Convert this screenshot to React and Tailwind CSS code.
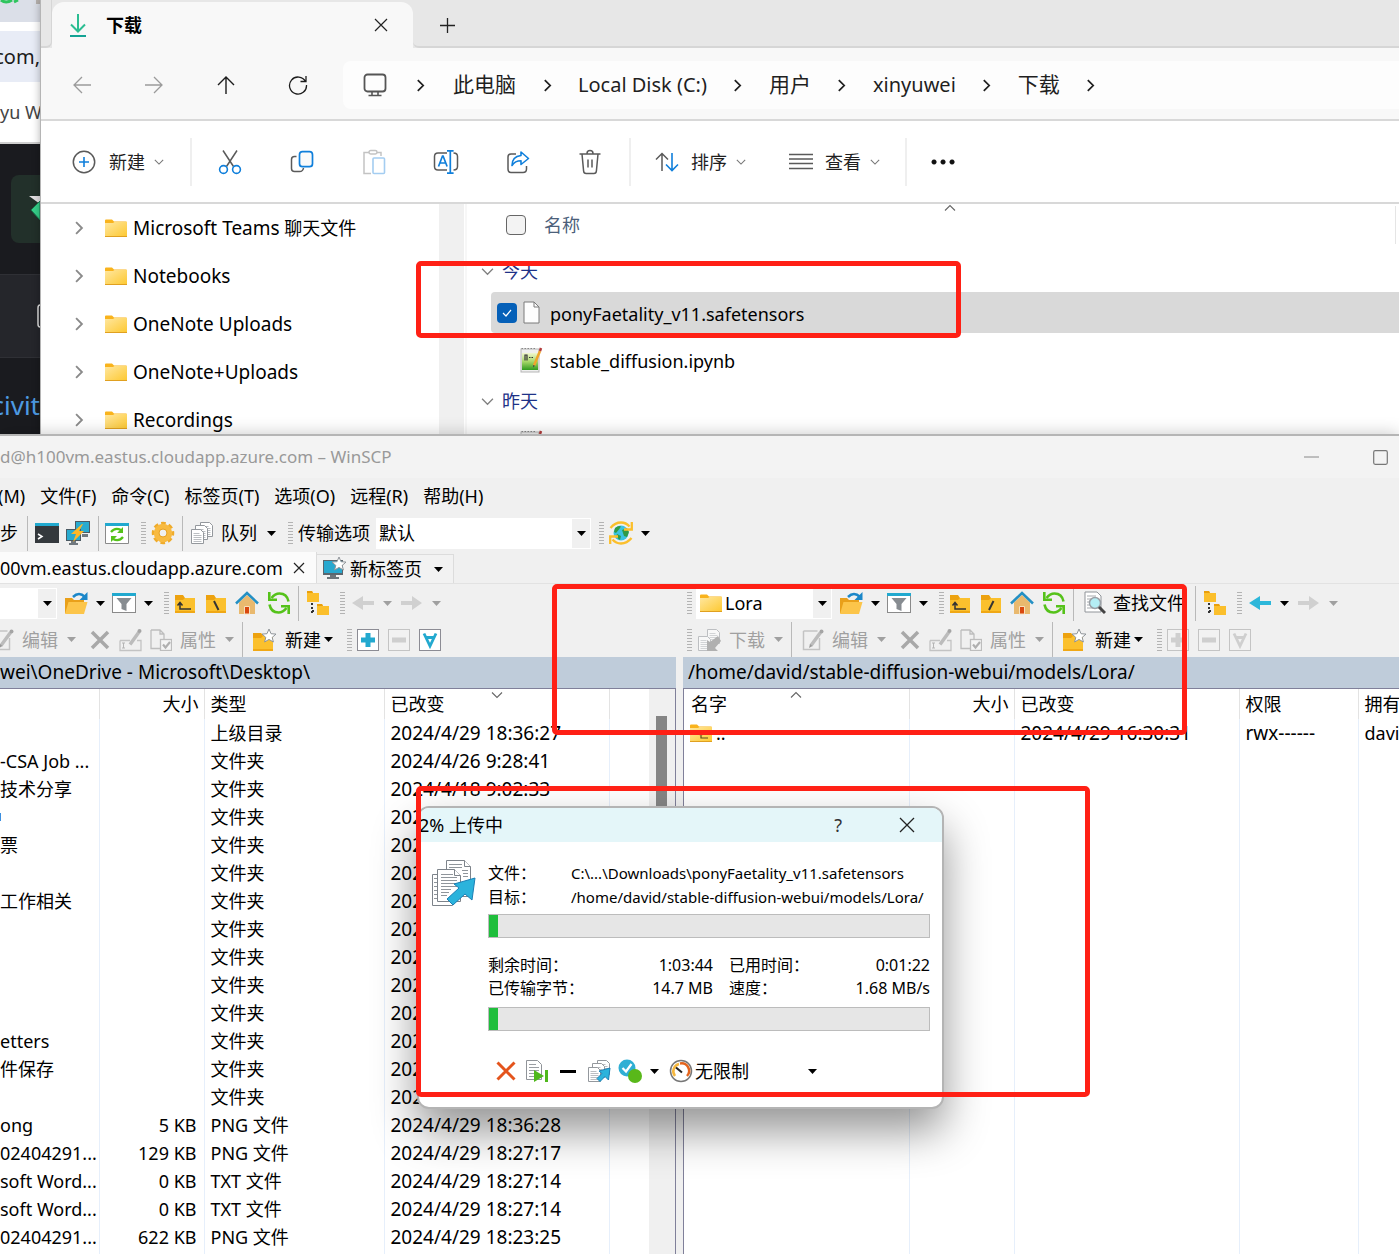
import React from "react";

/* ---------- small shared pieces ---------- */

const Svg = ({ w = 24, h = w, vb = `0 0 ${w} ${h}`, children, className = "" }) => (
  <svg width={w} height={h} viewBox={vb} fill="none" className={"shrink-0 " + className} aria-hidden="true">
    {children}
  </svg>
);

const Slot = ({ w, label, children }) => (
  <button type="button" aria-label={label} className={"flex h-full shrink-0 items-center justify-center " + w}>
    {children}
  </button>
);

const Tri = ({ w = "w-[10px]", off }) => (
  <Slot w={w} label="more">
    <Svg w={9} h={5}>
      <path d="M0 0h9L4.5 5z" fill={off ? "#a0a0a0" : "#000"} />
    </Svg>
  </Slot>
);

const Sep = () => <span className="h-[35px] w-px shrink-0 bg-[#b9b9b9]" />;

const Grip = () => (
  <Svg w={5} h={22}>
    <path d="M0 .5h5M0 3.5h5M0 6.5h5M0 9.5h5M0 12.5h5M0 15.5h5M0 18.5h5M0 21.5h5" stroke="#b3b3b3" />
  </Svg>
);

const Chevron = ({ dir = "right", size = 12, color = "#1f1f1f", sw = 1.6 }) => {
  const d = {
    right: "M3.5 1 8.5 6 3.5 11",
    down: "M1 3.5 6 8.5 11 3.5",
    up: "M1 8.5 6 3.5 11 8.5",
  }[dir];
  return (
    <Svg w={size} vb="0 0 12 12">
      <path d={d} stroke={color} strokeWidth={sw} />
    </Svg>
  );
};

/* ---------- explorer icons ---------- */

const G = "#5a5a5a";
const B = "#0f7fdb";

const Folder = ({ children }) => (
  <Svg w={22} h={18}>
    <defs>
      <linearGradient id="fold" x1="0" y1="0" x2="1" y2="1">
        <stop offset="0" stopColor="#ffe7a0" />
        <stop offset="1" stopColor="#fdc933" />
      </linearGradient>
    </defs>
    <path d="M0 1.5Q0 .5 1 .5h6l2 2h12q1 0 1 1V6H0z" fill="#f9b31c" />
    <path d="M0 4h8l1.500-1H22v14H0z" fill="url(#fold)" />
    <path d="M0 17h22v1H0z" fill="#e0a020" />
    {children}
  </Svg>
);

const NewIcon = () => (
  <Svg w={24}>
    <circle cx="12" cy="12" r="10.700" stroke={G} strokeWidth="1.500" />
    <path d="M12 7v10M7 12h10" stroke={B} strokeWidth="1.600" />
  </Svg>
);
const CutIcon = () => (
  <Svg w={24} h={26}>
    <path d="M5 1.500 15.500 17.500M19 1.500 8.500 17.500" stroke={G} strokeWidth="1.500" />
    <circle cx="5.500" cy="20.500" r="3.900" stroke={B} strokeWidth="1.600" />
    <circle cx="18.500" cy="20.500" r="3.900" stroke={B} strokeWidth="1.600" />
  </Svg>
);
const CopyIcon = () => (
  <Svg w={24}>
    <path d="M6.500 6.500H4.500q-3 0-3 3v9q0 3 3 3h5q3.500 0 4-3.500" stroke={G} strokeWidth="1.500" />
    <rect x="9.500" y="1.700" width="13" height="15" rx="3" stroke={B} strokeWidth="1.700" fill="#fafafa" />
  </Svg>
);
const PasteIcon = () => (
  <Svg w={24} h={26}>
    <path d="M9 24.500H2V3.500h5M15 3.500h4V7" stroke="#c3c3c3" strokeWidth="1.500" />
    <rect x="7" y="1.500" width="8" height="3.500" rx="1.700" stroke="#c3c3c3" strokeWidth="1.500" />
    <rect x="11" y="9" width="11.500" height="15.500" rx="1" stroke="#a4cdf1" strokeWidth="1.600" />
  </Svg>
);
const RenameIcon = () => (
  <Svg w={26} h={26}>
    <path d="M14 4H5Q1.500 4 1.500 7.500v10Q1.500 21 5 21h9M20.500 4q4 0 4 3.500v10q0 3.500-4 3.500" stroke={G} strokeWidth="1.500" />
    <path d="m5.500 17.500 4-10.500h.6l4 10.500M7 14h5.500" stroke={B} strokeWidth="1.700" />
    <path d="M17.300 2v22M14 1.800h6.600M14 24.200h6.600" stroke={B} strokeWidth="1.700" />
  </Svg>
);
const ShareIcon = () => (
  <Svg w={24}>
    <path d="M10 4H5Q2 4 2 7v12q0 3.500 3 3.500h12q3.500 0 3.500-3.500v-3" stroke={G} strokeWidth="1.500" />
    <path d="M15 2l7.500 6.500-7.500 6v-3.700q-6 0-9 4.700 0-9 9-10z" stroke={B} strokeWidth="1.600" strokeLinejoin="round" />
  </Svg>
);
const TrashIcon = () => (
  <Svg w={24} h={26}>
    <path d="M1.500 5h21M9 4.500q0-3 3-3t3 3M4 5l1.600 17q.2 2.500 2.500 2.500h7.800q2.300 0 2.500-2.500L20 5M10 10.500v8M14 10.500v8" stroke={G} strokeWidth="1.500" />
  </Svg>
);
const SortIcon = () => (
  <Svg w={24} h={20}>
    <path d="M7 19V1.500M1 7.500l6-6 6 6" stroke={G} strokeWidth="1.500" />
    <path d="M17 1v17.500M11 12.500l6 6 6-6" stroke={B} strokeWidth="1.600" />
  </Svg>
);
const LinesIcon = () => (
  <Svg w={24} h={17}>
    <path d="M0 1.500h24M0 6h24M0 10.500h24M0 15.500h24" stroke={G} strokeWidth="1.500" />
  </Svg>
);
const NotebookFile = () => (
  <Svg w={24} h={26}>
    <defs>
      <linearGradient id="nbk" x1="0" y1="0" x2="0" y2="1">
        <stop offset="0" stopColor="#f2f7d0" />
        <stop offset=".5" stopColor="#a8d86a" />
        <stop offset="1" stopColor="#2f9a1e" />
      </linearGradient>
    </defs>
    <rect x="2" y="2" width="18" height="23" fill="#efefef" stroke="#b5b5b5" />
    <path d="M2.500 1.500h14" stroke="#888" strokeDasharray="1.500 1.500" />
    <rect x="3" y="6" width="16" height="17" fill="url(#nbk)" />
    <path d="M6 13.500V8h2v5.500M10 10.500h1.500M12.500 10.500H14" stroke="#333" strokeWidth="1.200" />
    <path d="M21 4 15 18.500" stroke="#f0a52c" strokeWidth="2.500" />
    <path d="m22 1-1 3" stroke="#b33b3b" strokeWidth="2.500" />
    <path d="m14 20.500.2-2.500 1.800.8z" fill="#444" />
  </Svg>
);
const BlankFile = () => (
  <Svg w={17} h={23}>
    <path d="M1 1h10l5 5v16H1z" fill="#fdfdfd" stroke="#7a7a7a" />
    <path d="M11 1v5h5" stroke="#7a7a7a" />
  </Svg>
);

/* ---------- transfer-client icons ---------- */

const YFolder = ({ children }) => (
  <Svg w={22} h={22}>
    <path d="M1 3h8l2 3h10v3H1z" fill="#eda20f" />
    <path d="M1 8h8l2-2h10v14H1z" fill="#fbc02d" />
    <path d="M1 19h20v2H1z" fill="#f0a815" />
    {children}
  </Svg>
);
const FolderUp = () => (
  <YFolder><path d="M6 11v6h11M3.500 13.500 6 10.500l2.500 3" stroke="#333" strokeWidth="1.500" /></YFolder>
);
const FolderRoot = ({ back }) => (
  <YFolder><path d={back ? "M9 9l4.500 9" : "M13.500 9 9 18"} stroke="#333" strokeWidth="2" /></YFolder>
);
const FolderOpen = () => (
  <Svg w={24}>
    <path d="M1 7h7l2 2h10v13H1z" fill="#e9a01a" />
    <path d="M4.500 11h19L20 23H1z" fill="#fcc54a" />
    <path d="M9 6q6-6 12 0" stroke="#1b87c9" strokeWidth="2.500" />
    <path d="M23.500 1v8h-8z" fill="#1b87c9" />
  </Svg>
);
const FilterIcon = () => (
  <Svg w={24} h={22}>
    <rect x=".5" y="1.500" width="23" height="19" fill="#fff" stroke="#8a8a8a" />
    <path d="M0 1h24v3H0z" fill="#21a9cf" />
    <path d="M4.500 6h15l-5 6v7l-5-2v-5z" fill="#878c91" />
  </Svg>
);
const HomeIcon = () => (
  <Svg w={24}>
    <path d="M4 11.500 12 4l8 7.500V23H4z" fill="#e9b96e" />
    <path d="M1 12.500 12 2l11 10.500" stroke="#2490c4" strokeWidth="2.500" />
    <path d="M9.500 15.500h5V23h-5z" fill="#d9480f" stroke="#f7e0bd" />
  </Svg>
);
const RefreshIcon = () => (
  <Svg w={24}>
    <path d="M4.500 7Q8 2.500 12.500 2.500q7.500 0 9 8M19.500 17q-3.500 4.500-8 4.500-7.500 0-9-8" stroke="#55c21a" strokeWidth="2.600" />
    <path d="M2.300 1v7.700H10M21.700 23v-7.700H14" stroke="#55c21a" strokeWidth="2.600" />
  </Svg>
);
const TreeIcon = () => (
  <Svg w={24} h={26}>
    <path d="M1 1h5l1 2h6v9H1zM11 14h5l1 2h6v9H11z" fill="#fbbf2c" />
    <path d="M1 1h5l1 2H1zM11 14h5l1 2h-6z" fill="#e99f0c" />
    <path d="M6 13v10M6 21h4" stroke="#333" strokeWidth="2" strokeDasharray="2 2" />
  </Svg>
);
const Arrow = ({ right, on }) => (
  <Svg w={22} h={16}>
    <path d={right ? "M0 6h11V1l10 7-10 7v-5H0z" : "M22 6H11V1L0 8l11 7v-5h11z"} fill={on ? "#2db7da" : "#d0d0d0"} />
  </Svg>
);
const FindIcon = () => (
  <Svg w={22} h={24}>
    <path d="M1 1h12l4 4v16H1z" fill="#fff" stroke="#909499" />
    <path d="M3 5h9M3 8h5M3 11h4M3 14h4M3 17h6" stroke="#a6aaaf" />
    <circle cx="11" cy="12" r="5.500" fill="#b4eef5" stroke="#9aa0a6" strokeWidth="1.500" />
    <path d="m15 16 6 6" stroke="#444" strokeWidth="3" />
  </Svg>
);
const EditIcon = () => (
  <Svg w={22}>
    <path d="M1.500 2h14M1.500 2v18.500h16V9" stroke="#c3c3c3" strokeWidth="1.500" />
    <path d="M18.500 3.500 9 16.500" stroke="#bcbcbc" strokeWidth="3.500" />
    <circle cx="19.500" cy="2.500" r="2" fill="#a5a5a5" />
    <path d="m7 19 1-4 2.500 2z" fill="#999" />
  </Svg>
);
const XGray = () => (
  <Svg w={20}><path d="m2 2 16 16M18 2 2 18" stroke="#a8a8a8" strokeWidth="3.500" /></Svg>
);
const RenGray = () => (
  <Svg w={23} h={24}>
    <path d="M1 12.500h10M18 12.500h4v10H1v-10" stroke="#c3c3c3" strokeWidth="1.300" />
    <path d="M3 15h3M3 20h3M4.500 15v5" stroke="#b5b5b5" />
    <path d="M20 4 11 16.500" stroke="#bcbcbc" strokeWidth="3.500" />
    <circle cx="20.500" cy="3" r="2" fill="#a5a5a5" />
  </Svg>
);
const PropsIcon = () => (
  <Svg w={22}>
    <path d="M1 1h9l4 4v5M1 1v18.500h9M10 1v4h4" stroke="#bdbdbd" strokeWidth="1.300" />
    <rect x="10.500" y="10.500" width="11" height="11" fill="#f5f5f5" stroke="#bdbdbd" strokeWidth="1.300" />
    <path d="m13 15.500 2.500 3L20 13" stroke="#b0b0b0" strokeWidth="2.200" />
  </Svg>
);
const Star = ({ x, y }) => (
  <path transform={`translate(${x} ${y})`} d="M7 0l2 4.700 5 .4-3.800 3.300L11.400 13 7 10.400 2.600 13l1.200-4.600L0 5.100l5-.4z" fill="#fff" stroke="#8f9499" />
);
const NewFolderIcon = () => (
  <Svg w={25} h={24}>
    <path d="M1 5h8l2 3h10v15H1z" fill="#fbc02d" />
    <path d="M1 5h8l2 3-2 2H1z" fill="#eda20f" />
    <path d="M1 21h20v2H1z" fill="#f0a815" />
    <Star x={10} y={1} />
  </Svg>
);
const BoxIcon = ({ kind, off }) => {
  const c = off ? "#cfcfcf" : "#23a9cf";
  const d = { plus: "M11 4v14M4 11h14", minus: "M4 11h14" }[kind];
  return (
    <Svg w={22}>
      <rect x=".5" y=".5" width="21" height="21" fill={off ? "#f2f2f2" : "#fff"} stroke={off ? "#c4c4c4" : "#8c8c94"} />
      {d ? <path d={d} stroke={c} strokeWidth="5" /> : <path d="m5 4.500 6 12.500 6-12.500M7.500 8.500h7" stroke={c} strokeWidth="2.800" />}
    </Svg>
  );
};
const Page = ({ x, y, fill = "#fff" }) => (
  <g transform={`translate(${x} ${y})`}>
    <path d="M.5.500h9l3 3v11h-12z" fill={fill} stroke="#94989d" />
    <path d="M2.500 4.500h6M2.500 6.500h8M2.500 8.500h8M2.500 10.500h8M2.500 12.500h8" stroke="#a9adb2" strokeWidth=".8" />
  </g>
);
const QueueIcon = () => (
  <Svg w={24}><Page x={10} y={1} /><Page x={5} y={4} /><Page x={1} y={8} /></Svg>
);
const DownloadIcon = () => (
  <Svg w={24}>
    <g opacity=".55"><Page x={10} y={1} /><Page x={1} y={8} /></g>
    <path d="m21 8-8 6-3-2v11h11l-3-3 6-7z" fill="#b0b0b0" />
  </Svg>
);
const TerminalIcon = () => (
  <Svg w={24} h={20}>
    <path d="M0 0h24v20H0z" fill="#34393d" /><path d="M0 0h24v3H0z" fill="#21a9cf" />
    <path d="m3 11 4 2.500L3 16" stroke="#fff" strokeWidth="1.500" />
  </Svg>
);
const PuttyIcon = () => (
  <Svg w={24} h={24}>
    <path d="M9 0h15v12H9z" fill="#4b5a63" /><path d="M10 1h13v10H10z" fill="#28abd0" />
    <path d="M0 8h15v12H0z" fill="#4b5a63" /><path d="M1 9h13v10H1z" fill="#28abd0" />
    <path d="M5 20h5v2h2v2H3v-2h2zM16 13h6v3h-6z" fill="#70787e" />
    <path d="M16 3 5 13h5l-3 8 11-11h-5l4-7z" fill="#fcb827" />
  </Svg>
);
const SyncWindow = () => (
  <Svg w={24} h={21}>
    <path d="M.5.500h23v20H.5z" fill="#fff" stroke="#8a8a8a" /><path d="M0 0h24v3H0z" fill="#21a9cf" />
    <path d="M6 9q4-5 10-2M18 14q-4 5-10 2" stroke="#55c21a" strokeWidth="2.300" />
    <path d="M18 4v6h-6zM6 19v-6h6z" fill="#55c21a" />
  </Svg>
);
const GearIcon = () => (
  <Svg w={24}>
    <circle cx="12" cy="12" r="9" stroke="#efab2a" strokeWidth="4.500" strokeDasharray="4.270 2.800" strokeDashoffset="2" />
    <circle cx="12" cy="12" r="6.500" stroke="#f8ba40" strokeWidth="5.500" />
    <circle cx="12" cy="12" r="4" stroke="#e8a325" />
  </Svg>
);
const GlobeIcon = () => (
  <Svg w={24} h={24}>
    <circle cx="12" cy="12" r="7.500" fill="#3cc3e0" />
    <path d="M6 7q4-3 6-1.500l-2 3-3 3.500-2-1zM13 9l5-2 2 4-2 5-3-1zM8 13l4 2-1 4-4-3z" fill="#2f9b46" />
    <path d="M1.500 7Q6 1.500 12 1.500q5 0 8.500 4M22.500 17Q18 22.500 12 22.500q-5 0-8.500-4" stroke="#fbbf2c" strokeWidth="2.300" />
    <path d="M22.800 1v7.500H15M1.200 23v-7.500H9" stroke="#fbbf2c" strokeWidth="2.300" />
  </Svg>
);
const NewTabIcon = () => (
  <Svg w={24} h={24}>
    <path d="M1 3h20v15H1z" fill="#5b666e" /><path d="M2 4h18v12H2z" fill="#28a8cf" />
    <path d="M8 18h6v2h3v2H5v-2h3z" fill="#6c747a" />
    <Star x={10} y={0} />
  </Svg>
);

/* ---------- browser strip behind the explorer ---------- */

const BrowserStrip = () => (
  <div className="flex w-10 shrink-0 flex-col overflow-hidden whitespace-nowrap bg-[#1a1b1f]">
    <div className="flex h-[22px] shrink-0 justify-between bg-[#dbdfe8]">
      <Svg w={20} h={4}><path d="M1 0q5 4 11 0M14 2l4-2" stroke="#2fc55e" strokeWidth="3" /></Svg>
      <span className="h-1 w-1 bg-[#b5b0ad]" />
    </div>
    <div className="h-[9px] shrink-0 bg-white" />
    <div className="flex h-[51px] shrink-0 items-center justify-end bg-[#e8ecf6] text-[20px] text-[#1c1c1c]">com,</div>
    <div className="flex h-[62px] shrink-0 items-center border-b-2 border-[#cfcfcf] bg-white text-lg text-[#444]">yu W</div>
    <div className="ml-[11px] mt-[31px] flex h-[68px] shrink-0 items-center justify-end rounded-l-lg bg-[#22302a]">
      <Svg w={11} h={28}>
        <path d="M0 1h11v8z" fill="#e2dfe2" />
        <path d="M11 6 2 15l9 10z" fill="#36d08a" stroke="#1a7a50" />
      </Svg>
    </div>
    <div className="mt-[31px] flex h-[84px] shrink-0 items-center justify-end border-y border-[#2f3035] bg-[#25262b]">
      <Svg w={3} h={24}><path d="M3 1Q1 1 1 4v16q0 3 2 3" stroke="#e0e0e0" strokeWidth="1.500" /></Svg>
    </div>
    <div className="flex h-[94px] shrink-0 items-center justify-end text-[26px] text-[#4d9ae2]">civit</div>
  </div>
);

/* ---------- explorer ---------- */

const Crumb = ({ children, cjk }) => (
  <>
    <button type="button" className={"shrink-0 " + (cjk ? "text-[21px]" : "text-[20px]")}>{children}</button>
    <span className="flex w-[62px] shrink-0 justify-center"><Chevron size={13} /></span>
  </>
);

const Divider = () => <span className="h-12 w-0.5 shrink-0 bg-[#efefef]" />;

const FileRow = ({ icon, name, selected }) => (
  <li className={"mb-1.5 ml-6 flex h-[41px] shrink-0 items-center rounded-l-sm " + (selected ? "bg-[#d9d9d9]" : "")}>
    <label className="flex items-center">
      <span className="flex w-[26px] justify-end">
        {selected && (
          <>
            <input type="checkbox" defaultChecked className="peer sr-only" />
            <span className="flex h-5 w-5 items-center justify-center rounded bg-[#0560b8]">
              <Svg w={10} h={8}><path d="m1 4 3 3 5-6" stroke="#fff" strokeWidth="1.200" /></Svg>
            </span>
          </>
        )}
      </span>
      <span className="flex w-7 justify-center">{icon}</span>
      <span className="ml-[5px] pt-0.5 text-lg">{name}</span>
    </label>
  </li>
);

const GroupHead = ({ children }) => (
  <button type="button" className="ml-3.5 flex h-[42px] shrink-0 items-center gap-2 text-lg text-[#1e3287]">
    <Chevron dir="down" color="#808080" sw={1.2} size={13} />
    {children}
  </button>
);

const Explorer = () => (
  <section className="flex min-w-0 flex-1 flex-col border-l border-[#b5b5b5] bg-white shadow-[0_0_8px_rgba(0,0,0,0.3)]">
    <div className="flex h-12 shrink-0 bg-[#e7e7e7]">
      <div className="w-[11px] rounded-br-md border-b-2 border-r border-[#d6d6d6]" />
      <div className="mt-0.5 flex w-[361px] items-center rounded-t-xl bg-[#f8f8f8] pl-4 pr-[25px]">
        <Svg w={20} h={24}>
          <path d="M10 1v17M3 11.500l7 7 7-7" stroke="#2bbd92" strokeWidth="2" />
          <path d="M2 23h16" stroke="#14a394" strokeWidth="2" />
        </Svg>
        <h1 className="ml-[18px] flex-1 text-lg font-bold">下载</h1>
        <button type="button" aria-label="close tab">
          <Svg w={14}><path d="m1 1 12 12M13 1 1 13" stroke="#222" strokeWidth="1.200" /></Svg>
        </button>
      </div>
      <button type="button" aria-label="new tab" className="flex flex-1 items-center rounded-bl-md border-b-2 border-[#d6d6d6] pl-[27px] pt-1">
        <Svg w={15}><path d="M7.500 0v15M0 7.500h15" stroke="#222" strokeWidth="1.300" /></Svg>
      </button>
    </div>

    <nav className="flex h-[73px] shrink-0 items-center border-b-2 border-[#d8d8d8] bg-[#f8f8f8] pl-[5px] pt-[3px]">
      <Slot w="w-[72px]" label="back"><Svg w={18}><path d="M18 9H1M9 1 1 9l8 8" stroke="#9b9b9b" strokeWidth="1.300" /></Svg></Slot>
      <Slot w="w-[72px]" label="forward"><Svg w={18}><path d="M0 9h17M9 1l8 8-8 8" stroke="#9b9b9b" strokeWidth="1.300" /></Svg></Slot>
      <Slot w="w-[72px]" label="up"><Svg w={18}><path d="M9 18V1M1 9l8-8 8 8" stroke="#1c1c1c" strokeWidth="1.400" /></Svg></Slot>
      <Slot w="w-[72px]" label="refresh">
        <Svg w={20}><path d="M17.500 6.500A8.500 8.500 0 1 0 18.500 10M18 1v5.500h-5.500" stroke="#1c1c1c" strokeWidth="1.300" /></Svg>
      </Slot>
      <div className="ml-[9px] flex h-12 min-w-0 flex-1 items-center overflow-hidden rounded-l-lg bg-[#fdfdfd] pl-5 text-[#1f1f1f]">
        <Svg w={24} h={24}>
          <rect x="1.500" y="1.500" width="21" height="17" rx="3" stroke="#555" strokeWidth="1.800" />
          <path d="M9 19v3M15 19v3M5.500 22.500h13" stroke="#555" strokeWidth="1.600" />
        </Svg>
        <span className="flex w-[66px] shrink-0 justify-center"><Chevron size={13} /></span>
        <Crumb cjk>此电脑</Crumb>
        <Crumb>Local Disk (C:)</Crumb>
        <Crumb cjk>用户</Crumb>
        <Crumb>xinyuwei</Crumb>
        <Crumb cjk>下载</Crumb>
      </div>
    </nav>

    <div className="flex h-[83px] shrink-0 items-center border-b-2 border-[#d8d8d8] text-lg text-[#1f1f1f]">
      <button type="button" className="flex w-[149px] shrink-0 items-center pl-[31px]">
        <NewIcon /><span className="ml-[13px]">新建</span>
        <span className="ml-[9px]"><Chevron dir="down" size={10} color="#777" sw={1.3} /></span>
      </button>
      <Divider />
      <div className="flex h-full pl-0.5 pr-[3px]">
        <Slot w="w-[72px]" label="cut"><CutIcon /></Slot>
        <Slot w="w-[72px]" label="copy"><CopyIcon /></Slot>
        <Slot w="w-[72px]" label="paste"><PasteIcon /></Slot>
        <Slot w="w-[72px]" label="rename"><RenameIcon /></Slot>
        <Slot w="w-[72px]" label="share"><ShareIcon /></Slot>
        <Slot w="w-[72px]" label="delete"><TrashIcon /></Slot>
      </div>
      <Divider />
      <button type="button" className="flex shrink-0 items-center pl-6">
        <SortIcon /><span className="ml-3">排序</span>
        <span className="ml-[9px]"><Chevron dir="down" size={10} color="#777" sw={1.3} /></span>
      </button>
      <button type="button" className="ml-[43px] flex shrink-0 items-center">
        <LinesIcon /><span className="ml-3">查看</span>
        <span className="ml-[9px] mr-[25px]"><Chevron dir="down" size={10} color="#777" sw={1.3} /></span>
      </button>
      <Divider />
      <Slot w="w-[72px]" label="more">
        <Svg w={24} h={6}><path d="M3 .5a2.500 2.500 0 1 0 .1 0M12 .5a2.500 2.500 0 1 0 .1 0M21 .5a2.500 2.500 0 1 0 .1 0" fill="#111" /></Svg>
      </Slot>
    </div>

    <div className="flex min-h-0 flex-1">
      <ul className="w-[398px] shrink-0 overflow-hidden">
        {["Microsoft Teams", "Notebooks", "OneNote Uploads", "OneNote+Uploads", "Recordings"].map((n, i) => (
          <li key={n} className="flex h-12 items-center pl-[31px]">
            <Chevron size={14} color="#8a8a8a" />
            <span className="ml-[19px] mr-1.5"><Folder /></span>
            <span className="text-[19px]">{n}{i === 0 && <span className="text-lg"> 聊天文件</span>}</span>
          </li>
        ))}
      </ul>
      <div className="w-[25px] shrink-0 bg-[#f0f0f0]" />
      <div className="ml-px flex min-w-0 flex-1 flex-col overflow-hidden border-l-2 border-[#f7f7f7]">
        <div className="mb-1 flex h-[42px] shrink-0 items-center justify-between">
          <label className="ml-[39px] flex items-center gap-[18px] text-lg text-[#4c607a]">
            <input type="checkbox" className="h-5 w-5 appearance-none rounded border border-[#666] bg-[#f3f3f3]" />
            名称
          </label>
          <span className="mr-[3px] h-[38px] w-px bg-[#e5e5e5]" />
        </div>
        <GroupHead>今天</GroupHead>
        <ul className="shrink-0"><FileRow selected icon={<BlankFile />} name="ponyFaetality_v11.safetensors" /></ul>
        <ul className="-mb-1.5 shrink-0"><FileRow icon={<NotebookFile />} name="stable_diffusion.ipynb" /></ul>
        <GroupHead>昨天</GroupHead>
        <ul className="shrink-0"><FileRow icon={<NotebookFile />} name="" /></ul>
      </div>
    </div>
  </section>
);

/* ---------- transfer client ---------- */

const NavTools = ({ remote }) => (
  <div className="flex h-full shrink-0 items-center">
    <Slot w="w-[38px]" label="open directory"><FolderOpen /></Slot>
    <Tri />
    <Slot w="w-[38px]" label="filter"><FilterIcon /></Slot>
    <Tri />
    <span className="ml-[11px]"><Grip /></span>
    <Slot w="w-[31px]" label="parent directory"><FolderUp /></Slot>
    <Slot w="w-[31px]" label="root directory"><FolderRoot back={!remote} /></Slot>
    <Slot w="w-8" label="home directory"><HomeIcon /></Slot>
    <Slot w="w-[31px]" label="refresh"><RefreshIcon /></Slot>
    <span className="w-1" />
    <Sep />
    {remote && (
      <>
        <button type="button" className="flex shrink-0 items-center gap-[7px] px-2.5"><FindIcon />查找文件</button>
        <Sep />
      </>
    )}
    <Slot w="w-[38px]" label="directory tree"><TreeIcon /></Slot>
    <span className="ml-[3px]"><Grip /></span>
    <Slot w="w-[35px]" label="back"><Arrow on={remote} /></Slot>
    <Tri w="w-[14px]" off={!remote} />
    <Slot w="w-[35px]" label="forward"><Arrow right /></Slot>
    <Tri w="w-[14px]" off />
  </div>
);

const EditTools = ({ remote }) => (
  <div className="flex h-full shrink-0 items-center text-[#a0a0a0]">
    <Sep />
    <button type="button" className="ml-2.5 flex items-center gap-2"><EditIcon />编辑</button>
    <Tri w="w-[26px]" off />
    <Slot w="w-[31px]" label="delete"><XGray /></Slot>
    <Slot w="w-[31px]" label="rename"><RenGray /></Slot>
    <button type="button" className="ml-1 flex items-center gap-2"><PropsIcon />属性</button>
    <Tri w="w-[26px]" off />
    <Sep />
    <button type="button" className="ml-[9px] flex items-center gap-2 text-black"><NewFolderIcon />新建</button>
    <Tri w="w-[14px]" />
    <span className="ml-3"><Grip /></span>
    <Slot w="w-[31px]" label="select"><BoxIcon kind="plus" off={remote} /></Slot>
    <Slot w="w-[31px]" label="unselect"><BoxIcon kind="minus" off /></Slot>
    <Slot w="w-[31px]" label="select all"><BoxIcon kind="all" off={remote} /></Slot>
  </div>
);

const D = "2024/4/";
const dir = (name, date = D + "18 9:02:33") => [name, "", "文件夹", date];
const localRows = [
  ["", "", "上级目录", D + "29 18:36:27"],
  dir("-CSA Job ...", D + "26 9:28:41"),
  dir("技术分享"),
  dir(<span className="block h-2 w-px bg-[#3b8fe0]" />),
  dir("票"),
  dir(""),
  dir("工作相关"),
  dir(""),
  dir(""),
  dir(""),
  dir(""),
  dir("etters"),
  dir("件保存"),
  dir(""),
  ["ong", "5 KB", "PNG 文件", D + "29 18:36:28"],
  ["02404291...", "129 KB", "PNG 文件", D + "29 18:27:17"],
  ["soft Word...", "0 KB", "TXT 文件", D + "29 18:27:14"],
  ["soft Word...", "0 KB", "TXT 文件", D + "29 18:27:14"],
  ["02404291...", "622 KB", "PNG 文件", D + "29 18:23:25"],
];

const th = "h-[30px] overflow-hidden border-r border-[#e3e3e3] p-0 font-normal whitespace-nowrap ";
const td = "h-7 overflow-hidden border-r border-[#e6effb] p-0 whitespace-nowrap ";

const SortMark = ({ dir }) => (
  <span className="absolute inset-x-0 top-0 flex justify-center"><Chevron dir={dir} size={12} color="#666" sw={1.1} /></span>
);

const LocalTable = () => (
  <table className="h-full w-full table-fixed border-collapse leading-7">
    <colgroup>
      <col className="w-[99px]" /><col className="w-[105px]" /><col className="w-[180px]" /><col className="w-[225px]" /><col />
    </colgroup>
    <thead>
      <tr className="h-[30px] text-left">
        <th className={th} />
        <th className={th + "pr-[5px] text-right"}>大小</th>
        <th className={th + "pl-1.5"}>类型</th>
        <th className={th + "relative pl-1.5"}>已改变<SortMark dir="down" /></th>
        <th className="p-0" />
      </tr>
    </thead>
    <tbody>
      {localRows.map((r, i) => (
        <tr key={i} className="h-7">
          <td className={td}>{r[0]}</td>
          <td className={td + "pr-[7px] text-right"}>{r[1]}</td>
          <td className={td + "pl-1.5"}>{r[2]}</td>
          <td className={td + "pl-1.5 text-[19px]"}>{r[3]}</td>
          <td className="p-0" />
        </tr>
      ))}
      <tr>
        {[0, 1, 2, 3].map((i) => <td key={i} className="border-r border-[#e6effb] p-0" />)}
        <td className="p-0" />
      </tr>
    </tbody>
  </table>
);

const RemoteTable = () => (
  <table className="h-full w-full table-fixed border-collapse leading-7">
    <colgroup>
      <col className="w-[225px]" /><col className="w-[105px]" /><col className="w-[225px]" /><col className="w-[119px]" /><col />
    </colgroup>
    <thead>
      <tr className="h-[30px] text-left">
        <th className={th + "relative pl-[7px]"}>名字<SortMark dir="up" /></th>
        <th className={th + "pr-[5px] text-right"}>大小</th>
        <th className={th + "pl-1.5"}>已改变</th>
        <th className={th + "pl-1.5"}>权限</th>
        <th className="overflow-hidden whitespace-nowrap p-0 pl-1.5 font-normal">拥有者</th>
      </tr>
    </thead>
    <tbody>
      <tr className="h-7">
        <td className={td + "pl-1.5"}>
          <span className="flex items-center gap-1">
            <Folder><path d="M11 9v5h7M9 11l2-2.500 2 2.500" stroke="#5a4a1a" strokeWidth="1.200" /></Folder>..
          </span>
        </td>
        <td className={td} />
        <td className={td + "pl-1.5 text-[19px]"}>{D}29 16:30:31</td>
        <td className={td + "pl-1.5 text-[19px]"}>rwx------</td>
        <td className="overflow-hidden whitespace-nowrap p-0 pl-1.5">david</td>
      </tr>
      <tr>
        {[0, 1, 2, 3].map((i) => <td key={i} className="border-r border-[#e6effb] p-0" />)}
        <td className="p-0" />
      </tr>
    </tbody>
  </table>
);

const PathBar = ({ children, pad }) => (
  <div className={"flex h-8 shrink-0 items-center overflow-hidden whitespace-nowrap border-b border-[#80809a] bg-[#bfccda] text-[19px] " + pad}>
    {children}
  </div>
);

const Client = () => (
  <section className="relative flex min-h-0 flex-1 flex-col border-t-2 border-[#b5b5b5] bg-[#f0f0f0] text-lg text-black shadow-[0_0_16px_rgba(0,0,0,0.22)]">
    <header className="flex h-[42px] shrink-0 items-center justify-between bg-[#f3f3f3] text-[17px] text-[#999]">
      <span>d@h100vm.eastus.cloudapp.azure.com – WinSCP</span>
      <span className="flex items-center">
        <Slot w="w-[68px]" label="minimize"><Svg w={15} h={2}><path d="M0 1h15" stroke="#888" /></Svg></Slot>
        <Slot w="w-[54px]" label="maximize">
          <span className="ml-4 flex"><Svg w={15}><rect x=".7" y=".7" width="13.600" height="13.600" rx="1.500" stroke="#777" strokeWidth="1.200" /></Svg></span>
        </Slot>
      </span>
    </header>

    <nav className="-ml-0.5 flex h-9 shrink-0 items-center gap-[15px]">
      {["(M)", "文件(F)", "命令(C)", "标签页(T)", "选项(O)", "远程(R)", "帮助(H)"].map((m) => (
        <button type="button" key={m} className="shrink-0">{m}</button>
      ))}
    </nav>

    <div className="flex h-[38px] shrink-0 items-center">
      <button type="button" className="mr-[9px]">步</button>
      <Sep />
      <div className="flex h-full px-[3px]">
        <Slot w="w-[31px]" label="terminal"><TerminalIcon /></Slot>
        <Slot w="w-[31px]" label="open in PuTTY"><PuttyIcon /></Slot>
      </div>
      <span className="w-0.5" />
      <Sep />
      <Slot w="w-9" label="synchronize"><SyncWindow /></Slot>
      <span className="ml-1.5"><Grip /></span>
      <Slot w="w-[34px]" label="preferences"><GearIcon /></Slot>
      <span className="w-0.5" />
      <Sep />
      <button type="button" className="ml-[7px] flex items-center gap-[7px]"><QueueIcon />队列</button>
      <Tri w="w-[28px]" />
      <span className="ml-[3px] mr-[5px]"><Grip /></span>
      <label htmlFor="transfer" className="mr-1.5">传输选项</label>
      <div className="flex h-[31px] w-[215px] items-center bg-white p-px">
        <select id="transfer" className="h-full min-w-0 flex-1 appearance-none bg-white pl-0.5 outline-none"><option>默认</option></select>
        <span className="flex h-full bg-[#f0f0f0]"><Tri w="w-[18px]" /></span>
      </div>
      <span className="ml-2"><Grip /></span>
      <Slot w="w-[34px]" label="queue sync"><GlobeIcon /></Slot>
      <Tri w="w-[14px]" />
    </div>

    <div className="flex h-8 shrink-0 items-end border-b border-[#e2e2e2]">
      <div className="flex h-full w-[317px] items-center gap-2.5 border-r border-[#dcdcdc] bg-[#fbfbfb]">
        <span>00vm.eastus.cloudapp.azure.com</span>
        <button type="button" aria-label="close session"><Svg w={12}><path d="m1 1 10 10M11 1 1 11" stroke="#222" strokeWidth="1.200" /></Svg></button>
      </div>
      <button type="button" className="flex h-[29px] w-[137px] items-center gap-1 border-r border-t border-[#dcdcdc] bg-[#f2f2f2] pl-[5px]">
        <NewTabIcon />新标签页
        <span className="ml-2"><Svg w={9} h={5}><path d="M0 0h9L4.500 5z" fill="#000" /></Svg></span>
      </button>
    </div>

    <div className="grid min-h-0 flex-1 grid-cols-[676fr_7px_716fr]">
      <div className="flex min-h-0 min-w-0 flex-col overflow-hidden">
        <div className="flex h-[38px] shrink-0 items-center">
          <div className="flex h-[31px] w-[57px] shrink-0 items-center justify-end bg-white p-px">
            <span className="flex h-full bg-[#f0f0f0]"><Tri w="w-[18px]" /></span>
          </div>
          <NavTools />
        </div>
        <div className="-ml-[19px] flex h-[35px] shrink-0 items-center"><EditTools /></div>
        <PathBar pad="">wei\OneDrive - Microsoft\Desktop\</PathBar>
        <div className="flex min-h-0 flex-1 overflow-hidden border-r border-[#80809a] bg-white">
          <div className="min-w-0 flex-1"><LocalTable /></div>
          <div className="w-[26px] shrink-0 bg-[#f0f0f0] pl-[7px] pt-[27px]"><div className="h-64 w-[11px] bg-[#858585]" /></div>
        </div>
      </div>
      <div />
      <div className="flex min-h-0 min-w-0 flex-col overflow-hidden">
        <div className="flex h-[38px] shrink-0 items-center pl-1">
          <Grip />
          <div className="ml-1 flex h-[31px] w-[136px] shrink-0 items-center bg-white p-px pl-1">
            <Folder />
            <select aria-label="directory" className="ml-[3px] h-full min-w-0 flex-1 appearance-none bg-white outline-none"><option>Lora</option></select>
            <span className="flex h-full bg-[#f0f0f0]"><Tri w="w-[18px]" /></span>
          </div>
          <NavTools remote />
        </div>
        <div className="flex h-[35px] shrink-0 items-center pl-1">
          <Grip />
          <button type="button" className="ml-[5px] flex shrink-0 items-center gap-2 text-[#a0a0a0]"><DownloadIcon />下载</button>
          <Tri w="w-[26px]" off />
          <EditTools remote />
        </div>
        <PathBar pad="pl-[5px]">/home/david/stable-diffusion-webui/models/Lora/</PathBar>
        <div className="min-h-0 flex-1 overflow-hidden border-l border-[#80809a] bg-white"><RemoteTable /></div>
      </div>
    </div>
  </section>
);

/* ---------- upload dialog ---------- */

const Progress = () => (
  <div role="progressbar" aria-valuenow={2} className="h-6 border border-[#bcbcbc] bg-[#e6e6e6]">
    <div className="h-full w-[2%] bg-[#1fbe3c]" />
  </div>
);

const UploadPages = () => (
  <Svg w={44} h={48}>
    <g fill="#fff" stroke="#7d838a">
      <path d="M14.500 1.500h18l6 6v30h-24z" />
      <path d="M32.500 1.500v6h6" />
      <path d="M.5 15.500h20v31H.5z" />
      <path d="M5.500 10.500h17l6 6v26h-23z" />
      <path d="M22.500 10.500v6h6" />
    </g>
    <path d="M17 5.500h13M17 8.500h13M30 11.500h6M31 14.500h5M31 17.500h5M9 15.500h12M9 18.500h16M9 21.500h16M9 24.500h16M9 27.500h16M9 30.500h10M9 33.500h8M9 36.500h6M2 19.500h3M2 23.500h3M2 27.500h3M2 31.500h3M2 35.500h3M2 39.500h3" stroke="#8f959b" />
    <path d="M43 19 22 25l5 4L15 40l6 6 12-11 7 6z" fill="#2bb3dc" stroke="#1b7fb5" />
  </Svg>
);

const UploadDialog = () => (
  <div role="dialog" aria-label="2% 上传中" className="absolute left-[417px] top-[806px] w-[527px] overflow-hidden rounded-xl border-2 border-[#b4b4b4] bg-white text-black shadow-[0_22px_44px_rgba(0,0,0,0.42)]">
    <div className="flex h-[34px] items-center bg-[#e4f6f9] pr-[27px] text-lg">
      <span className="flex-1">2% 上传中</span>
      <button type="button" aria-label="help" className="mr-[57px] text-lg text-[#333]">?</button>
      <button type="button" aria-label="close">
        <Svg w={16}><path d="m1 1 14 14M15 1 1 15" stroke="#222" strokeWidth="1.300" /></Svg>
      </button>
    </div>
    <div className="flex pb-5 pl-[13px] pr-3 pt-[17px] text-base leading-6">
      <UploadPages />
      <div className="ml-3 min-w-0 flex-1 pt-0.5">
        <dl className="grid grid-cols-[83px_1fr] whitespace-nowrap">
          <dt>文件：</dt><dd className="text-[15px]">C:\...\Downloads\ponyFaetality_v11.safetensors</dd>
          <dt>目标：</dt><dd className="text-[15px]">/home/david/stable-diffusion-webui/models/Lora/</dd>
        </dl>
        <div className="mt-[5px]"><Progress /></div>
        <dl className="mb-[7px] mt-4 grid grid-cols-[28fr_28fr_27fr_27fr] whitespace-nowrap leading-[23px]">
          <dt>剩余时间：</dt><dd className="text-right">1:03:44</dd>
          <dt className="pl-4">已用时间：</dt><dd className="text-right">0:01:22</dd>
          <dt>已传输字节：</dt><dd className="text-right">14.7 MB</dd>
          <dt className="pl-4">速度：</dt><dd className="text-right">1.68 MB/s</dd>
        </dl>
        <Progress />
        <div className="mt-6 flex h-8 items-center pl-0.5 text-lg">
          <Slot w="w-[31px]" label="cancel"><Svg w={20}><path d="m1.500 1.500 17 17M18.500 1.500l-17 17" stroke="#e4541c" strokeWidth="3" /></Svg></Slot>
          <Slot w="w-[31px]" label="skip">
            <Svg w={24}>
              <path d="M1.500 1.500h11l4 4v15h-15z" fill="#fff" stroke="#909499" />
              <path d="M4 5.500h7M4 8.500h10M4 11.500h10M4 14.500h5M4 17.500h5" stroke="#9a9ea3" />
              <path d="m9 11 10 6-10 6z" fill="#4fb81c" /><path d="M20 11h3v12h-3z" fill="#4fb81c" />
            </Svg>
          </Slot>
          <Slot w="w-[31px]" label="minimize"><Svg w={16} h={3}><path d="M0 0h16v3H0z" fill="#000" /></Svg></Slot>
          <Slot w="w-[31px]" label="background">
            <Svg w={24}>
              <Page x={10} y={1} /><Page x={5} y={4} /><Page x={1} y={8} />
              <path d="M23 9 12 12l3 2.500-5 5 3 3 5-5 3.500 3.500z" fill="#2bb3dc" stroke="#1b7fb5" />
            </Svg>
          </Slot>
          <Slot w="w-[31px]" label="once done">
            <Svg w={24}>
              <circle cx="9" cy="9" r="8.500" fill="#2fafd4" /><path d="m4.500 9 3.500 3.500L13.500 5" stroke="#fff" strokeWidth="2.200" />
              <circle cx="17" cy="17" r="7" fill="#59b81a" />
            </Svg>
          </Slot>
          <Tri w="w-[18px]" />
          <label className="ml-1.5 flex flex-1 items-center gap-0.5">
            <Svg w={24}>
              <circle cx="12" cy="12" r="10.500" fill="#fff" stroke="#777" strokeWidth="1.500" />
              <path d="M6 17a7.500 7.500 0 0 1 4-12" stroke="#f6b73c" strokeWidth="2.500" />
              <path d="M11 4.500A7.500 7.500 0 0 1 18 17" stroke="#e4641c" strokeWidth="2.500" />
              <path d="m7 8.500 6 5" stroke="#222" strokeWidth="2" />
            </Svg>
            <select aria-label="speed limit" className="w-[111px] appearance-none bg-white outline-none"><option>无限制</option></select>
            <Svg w={9} h={5}><path d="M0 0h9L4.500 5z" fill="#000" /></Svg>
          </label>
        </div>
      </div>
    </div>
  </div>
);

const mark = "pointer-events-none absolute rounded-[5px] border-[5px] border-[#ff2015] ";

export default function App() {
  return (
    <main className="relative flex h-screen min-h-[1254px] flex-col overflow-hidden bg-white font-['Noto_Sans','Noto_Sans_CJK_SC',sans-serif] text-black">
      <div className="flex h-[434px] shrink-0 overflow-hidden">
        <BrowserStrip />
        <Explorer />
      </div>
      <Client />
      <span className="absolute left-[944px] top-[202px]"><Chevron dir="up" color="#666" sw={1.1} /></span>
      <UploadDialog />
      <div className={mark + "left-[416px] top-[261px] h-[77px] w-[545px]"} />
      <div className={mark + "left-[552px] top-[584px] h-[151px] w-[635px]"} />
      <div className={mark + "left-[416px] top-[786px] h-[311px] w-[674px]"} />
    </main>
  );
}
